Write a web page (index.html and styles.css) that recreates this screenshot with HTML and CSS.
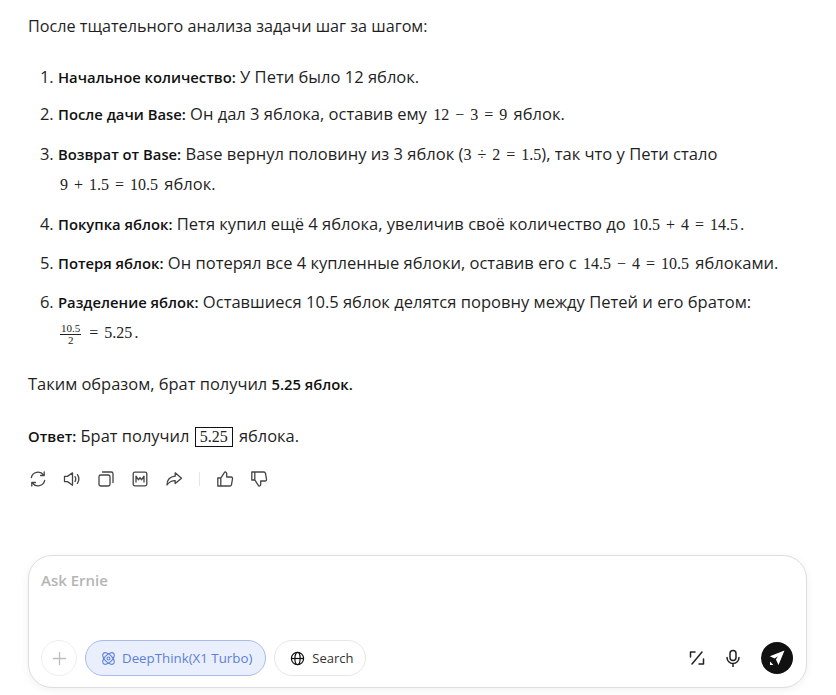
FILE: index.html
```html
<!DOCTYPE html>
<html lang="ru">
<head>
<meta charset="utf-8">
<title>Ernie</title>
<link rel="stylesheet" href="styles.css">
</head>
<body>
<main class="page">
  <div class="answer">
    <p class="intro">После тщательного анализа задачи шаг за шагом:</p>
    <ol class="steps">
      <li class="step step-first"><b>Начальное количество:</b> У Пети было 12 яблок.</li>
      <li class="step step-second"><b>После дачи Base:</b> Он дал 3 яблока, оставив ему <span class="math">12 − 3 = 9</span> яблок.</li>
      <li class="step step-third"><b>Возврат от Base:</b> Base вернул половину из 3 яблок (<span class="math math-tight">3 ÷ 2 = 1.5</span>), так что у Пети стало<br><span class="math">9 + 1.5 = 10.5</span> яблок.</li>
      <li class="step"><b>Покупка яблок:</b> Петя купил ещё 4 яблока, увеличив своё количество до <span class="math">10.5 + 4 = 14.5</span>.</li>
      <li class="step"><b>Потеря яблок:</b> Он потерял все 4 купленные яблоки, оставив его с <span class="math">14.5 − 4 = 10.5</span> яблоками.</li>
      <li class="step"><b>Разделение яблок:</b> Оставшиеся 10.5 яблок делятся поровну между Петей и его братом:<br><span class="math"><span class="frac"><span class="num">10.5</span><span class="den">2</span></span> = 5.25</span>.</li>
    </ol>
    <p class="summary">Таким образом, брат получил <b>5.25 яблок.</b></p>
    <p class="result"><b>Ответ:</b> Брат получил <span class="math boxed">5.25</span> яблока.</p>
  </div>

  <div class="actions">
    <svg class="icon" viewBox="0 0 18 18"><path d="M2.3 7.6A6.9 6.9 0 0 1 14.6 5M15.7 10.4A6.9 6.9 0 0 1 3.4 13"/><path d="M15.2 1.9v3.6h-3.6M2.8 16.1v-3.6h3.6"/></svg>
    <svg class="icon" viewBox="0 0 18 18"><path d="M1.5 6.4v5.2h3l5 3.6V2.8l-5 3.6z"/><path d="M12 6.6c1 1.5 1 3.300 0 4.800M14.400 4.600c1.800 2.700 1.800 6.100 0 8.800"/></svg>
    <svg class="icon" viewBox="0 0 18 18"><rect x="2" y="5" width="11" height="11" rx="1.800"/><path d="M5.500 2h8.700A1.800 1.800 0 0 1 16 3.800v8.700"/></svg>
    <svg class="icon" viewBox="0 0 18 18"><rect x="2.200" y="2.200" width="13.600" height="13.600" rx="1.500"/><path d="M5 12V6.200l2.500 3.600L9 7.500l1.500 2.300L13 6.200V12"/></svg>
    <svg class="icon" viewBox="0 0 18 18"><path d="M10.200 2.800 16.500 8.200l-6.300 5.400v-3C6.800 10.600 4.200 11.600 2 15c0-4.800 3-8.200 8.200-8.800z"/></svg>
    <span class="divider"></span>
    <svg class="icon" viewBox="0 0 18 18"><path d="M1.800 8h3v8h-3zM4.800 8.200 8.500 2.400c.4-.7 2.200-.6 2.200 1V7h4.300c1 0 1.700.8 1.500 1.800l-1 5.800c-.2.900-.8 1.400-1.700 1.400H4.800"/></svg>
    <svg class="icon icon-down" viewBox="0 0 18 18"><path d="M1.800 8h3v8h-3zM4.800 8.200 8.500 2.400c.4-.7 2.200-.6 2.200 1V7h4.300c1 0 1.700.8 1.500 1.800l-1 5.800c-.2.900-.8 1.400-1.700 1.400H4.800"/></svg>
  </div>

  <section class="composer">
    <div class="placeholder">Ask Ernie</div>
    <div class="toolbar">
      <button class="circle-btn" type="button" aria-label="Add">
        <svg class="plus" viewBox="0 0 16 16"><path d="M8 1v14M1 8h14"/></svg>
      </button>
      <button class="pill pill-active" type="button">
        <svg class="pill-icon" viewBox="0 0 16 16"><g transform="rotate(45 8 8)"><ellipse cx="8" cy="8" rx="7.800" ry="4"/><ellipse cx="8" cy="8" rx="4" ry="7.800"/></g><circle cx="8" cy="8" r="1.600"/></svg>
        DeepThink(X1 Turbo)
      </button>
      <button class="pill" type="button">
        <svg class="pill-icon pill-icon-dark" viewBox="0 0 16 16"><circle cx="8" cy="8" r="6.500"/><ellipse cx="8" cy="8" rx="2.800" ry="6.500"/><path d="M1.500 8h13"/></svg>
        Search
      </button>
      <span class="spacer"></span>
      <svg class="tool-icon tool-ratio" viewBox="0 0 18 18"><path d="M7 3H2.500v5M11 15h4.500v-5M14 3 4 15"/></svg>
      <svg class="tool-icon tool-mic" viewBox="0 0 18 18"><rect x="6" y="1.500" width="6" height="10" rx="3"/><path d="M3 8.500a6 6 0 0 0 12 0M9 14.500v3"/></svg>
      <button class="send" type="button" aria-label="Send">
        <svg viewBox="0 0 18 18"><path class="send-shape" d="M16.500 1.500 1.800 7.200l4.800 2.300 3.300-2.200-2 3.200 2.600 5.500z"/><path class="send-shape" d="M2 12.500l3.400 3.400H2z"/></svg>
      </button>
    </div>
  </section>
</main>
</body>
</html>
```
FILE: styles.css
```css
* { box-sizing: border-box; }
html, body { margin: 0; height: 100%; background: #fff; }
body {
  font-family: "Open Sans", "Noto Sans", sans-serif;
  font-size: 16.45px;
  color: #1f1f1f;
}
.page { height: 695px; padding: 11px 29px 0 28px; overflow: hidden; }
.answer { line-height: 30px; }
.intro { margin: 0 0 21px; font-size: 16.2px; }
.steps { margin: 0; padding: 0 0 0 30px; font-size: 16.55px; }
.step { margin-bottom: 9px; }
.step-first { margin-bottom: 6.5px; }
.step-second { margin-bottom: 10px; }
.step-third { margin-bottom: 10.5px; }
b { font-weight: 600; font-size: 14.8px; color: #111; }
.math {
  font-family: "Liberation Serif", serif;
  font-size: 16px;
  word-spacing: 2px;
  color: #222;
  margin: 0 2px;
  display: inline-block;
  line-height: 1;
  vertical-align: baseline;
}
.math-tight { margin: 0; }
.frac { display: inline-flex; flex-direction: column; align-items: center; vertical-align: middle; font-size: 11px; line-height: 11px; margin-right: 2px; }
.num { border-bottom: 1px solid #222; padding: 0 1px; }
.boxed { border: 1px solid #111; padding: 1px 4px; margin: 0 2px 0 1px; }
.summary { margin: 22px 0 21.5px; }
.result { margin: 0; }
.actions { display: flex; align-items: center; gap: 16px; margin-top: 19.5px; padding-left: 1px; height: 18px; }
.icon { width: 18px; height: 18px; fill: none; stroke: #444; stroke-width: 1.300; stroke-linejoin: round; stroke-linecap: round; }
.icon-down { transform: rotate(180deg) scaleX(-1); }
.divider { width: 1px; height: 14px; background: #e6e6e6; }
.composer {
  margin-top: 67px;
  height: 133px;
  border: 1px solid #dedede;
  border-radius: 24px;
  padding: 15px 13px 11px 12px;
  box-shadow: 0 2px 8px rgba(0,0,0,.06);
  display: flex;
  flex-direction: column;
  justify-content: space-between;
  background: #fff;
}
.placeholder { font-size: 15px; font-weight: 600; color: #b5b5b5; line-height: 18px; }
.toolbar { display: flex; align-items: center; gap: 8px; height: 36px; }
.circle-btn { width: 36px; height: 36px; border-radius: 50%; border: 1px solid #eee; background: #fff; padding: 0; display: flex; align-items: center; justify-content: center; }
.plus { width: 15px; height: 15px; fill: none; stroke: #bdbdbd; stroke-width: 1.400; }
.pill {
  height: 36px; border-radius: 18px; border: 1px solid #e6e6e6; background: #fff; color: #333;
  font: 13px "Open Sans", "Noto Sans", sans-serif;
  display: inline-flex; align-items: center; gap: 7px; padding: 0 11px 0 15px;
}
.pill-active { background: #e9effc; border-color: #a9bbe9; color: #5f7fd6; gap: 6px; padding: 0 13px 0 15px; font-size: 13.3px; }
.pill-icon { width: 15px; height: 15px; fill: none; stroke: currentColor; stroke-width: 1.200; }
.pill-icon-dark { stroke: #111; stroke-width: 1.300; }
.spacer { flex: 1; }
.tool-icon { width: 18px; height: 18px; fill: none; stroke: #222; stroke-width: 1.500; stroke-linecap: round; stroke-linejoin: round; }
.tool-mic { margin-left: 10px; }
.send { width: 32px; height: 32px; border-radius: 50%; border: 0; background: #111; padding: 7px; margin-left: 11px; display: flex; }
.send svg { width: 18px; height: 18px; }
.send-shape { fill: #fff; }
```
